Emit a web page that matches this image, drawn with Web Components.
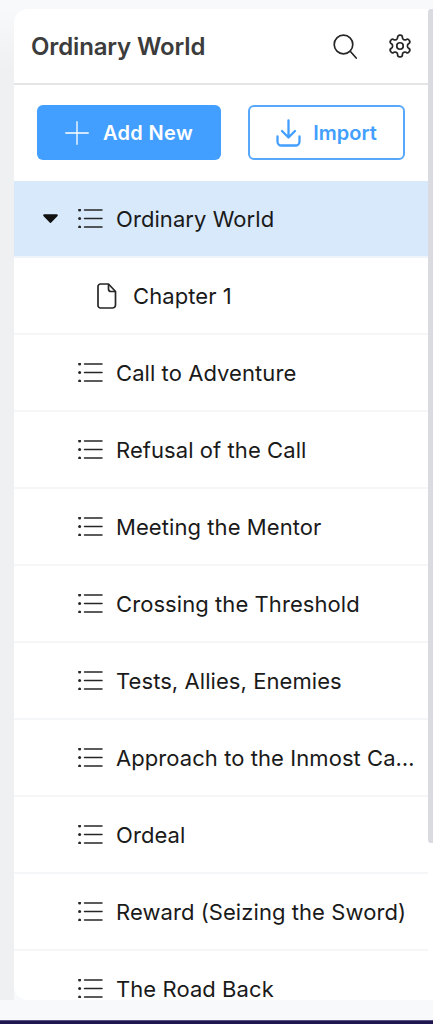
<!DOCTYPE html>
<html>
<head>
<meta charset="utf-8">
<style>
  html, body { margin: 0; height: 1024px; overflow: hidden; background: #f8f9fb; font-family: Inter, "Liberation Sans", sans-serif; }
</style>
</head>
<body>
<story-outline></story-outline>
<script>
const ICONS = {
  search: `<svg width="24" height="25" viewBox="0 0 24 25" fill="none" stroke="#262626" stroke-width="1.7" stroke-linecap="round"><circle cx="10.500" cy="10.500" r="9.300"/><path d="M17.200 17.300l6 6.700"/></svg>`,
  gear: `<svg width="26" height="26" viewBox="0 0 24 24" fill="none" stroke="#262626" stroke-width="1.6" stroke-linecap="round" stroke-linejoin="round"><path d="M12.220 2h-.44a2 2 0 0 0-2 2v.18a2 2 0 0 1-1 1.730l-.43.25a2 2 0 0 1-2 0l-.15-.08a2 2 0 0 0-2.730.73l-.22.38a2 2 0 0 0 .73 2.730l.15.1a2 2 0 0 1 1 1.720v.51a2 2 0 0 1-1 1.740l-.15.09a2 2 0 0 0-.73 2.730l.22.38a2 2 0 0 0 2.730.73l.15-.08a2 2 0 0 1 2 0l.43.25a2 2 0 0 1 1 1.730V20a2 2 0 0 0 2 2h.44a2 2 0 0 0 2-2v-.18a2 2 0 0 1 1-1.730l.43-.25a2 2 0 0 1 2 0l.15.08a2 2 0 0 0 2.730-.73l.22-.39a2 2 0 0 0-.73-2.730l-.15-.08a2 2 0 0 1-1-1.740v-.5a2 2 0 0 1 1-1.740l.15-.09a2 2 0 0 0 .73-2.730l-.22-.38a2 2 0 0 0-2.730-.73l-.15.08a2 2 0 0 1-2 0l-.43-.25a2 2 0 0 1-1-1.730V4a2 2 0 0 0-2-2z"/><circle cx="12" cy="12" r="3"/></svg>`,
  plus: `<svg width="24" height="24" viewBox="0 0 24 24" fill="none" stroke="currentColor" stroke-width="1.3" stroke-linecap="round"><path d="M12 .7v22.600M.7 12h22.600"/></svg>`,
  download: `<svg width="25" height="28" viewBox="0 0 25 28" fill="none" stroke="currentColor" stroke-width="2.300" stroke-linecap="round" stroke-linejoin="round"><path d="M12.500 1.500v17M6 12l6.500 6.500L19 12"/><path d="M1.500 17.500v5a4 4 0 0 0 4 4h14a4 4 0 0 0 4-4v-5"/></svg>`,
  list: `<svg width="25" height="19" viewBox="0 0 25 19" fill="none" stroke="#262626" stroke-width="1.500" stroke-linecap="round"><path d="M6.500 1h17.500M6.500 9.500h17.500M6.500 18h17.500"/><g fill="#262626" stroke="none"><circle cx="1.600" cy="1" r="1.500"/><circle cx="1.600" cy="9.500" r="1.500"/><circle cx="1.600" cy="18" r="1.500"/></g></svg>`,
  file: `<svg width="20" height="26" viewBox="0 0 20 26" fill="none" stroke="#262626" stroke-width="1.700" stroke-linejoin="round"><path d="M3.500 1h8l7 7.500v13.500a3 3 0 0 1-3 3H3.500a2.500 2.500 0 0 1-2.500-2.500V3.500A2.500 2.500 0 0 1 3.500 1z"/><path d="M11.500 1v5a2.500 2.500 0 0 0 2.500 2.500h4.500"/></svg>`,
  caret: `<svg width="15" height="9" viewBox="0 0 15 9"><path d="M1.200.3h12.600a1 1 0 0 1 .8 1.600L8.300 8.500a1 1 0 0 1-1.600 0L.4 1.900A1 1 0 0 1 1.200.3z" fill="#111"/></svg>`
}

class ActionButton extends HTMLElement {
  constructor(){
    super()
    this.attachShadow({ mode: "open" })
    const filled = this.hasAttribute("filled")
    this.shadowRoot.innerHTML = `
      <style>
        :host { display: block; box-sizing: border-box; height: 55px; border-radius: 6px; }
        div {
          box-sizing: border-box; height: 100%; display: flex; align-items: center; justify-content: center;
          gap: ${filled ? 14 : 12}px; border-radius: 6px; font-size: 20px; font-weight: 600;
          letter-spacing: ${filled ? .35 : 0}px;
          background: ${filled ? "#429eff" : "#fff"}; color: ${filled ? "#fff" : "#429eff"};
          border: ${filled ? "none" : "2px solid #57a8fb"};
        }
        svg { display: block; }
      </style>
      <div>${ICONS[this.getAttribute("icon")]}<slot></slot></div>`
  }
}

class OutlineRow extends HTMLElement {
  constructor(){
    super()
    this.attachShadow({ mode: "open" })
    const kind = this.getAttribute("kind") || "list"
    const open = this.hasAttribute("open")
    this.shadowRoot.innerHTML = `
      <style>
        :host { display: block; flex: none; height: 77px; box-sizing: border-box; border-bottom: 2px solid #f5f6f7; }
        :host([open]) { background: #d7e9fb; border-bottom-color: #eef4fa; }
        .row { height: 100%; display: flex; align-items: center; padding-left: ${kind === "file" ? 83 : 64}px; font-size: 22px; letter-spacing: .07px; color: #1a1a1a; white-space: nowrap; }
        .caret { position: absolute; margin-left: -35px; line-height: 0; }
        .icon { width: ${kind === "file" ? 20 : 25}px; display: flex; margin-right: ${kind === "file" ? 16 : 13}px; }
        svg { display: block; }
        .label { width: 300px; overflow: hidden; text-overflow: ellipsis; }
      </style>
      <div class="row">
        ${open ? `<span class="caret">${ICONS.caret}</span>` : ""}
        <span class="icon">${ICONS[kind]}</span>
        <span class="label"><slot></slot></span>
      </div>`
  }
}

class StoryOutline extends HTMLElement {
  constructor(){
    super()
    this.attachShadow({ mode: "open" })
    this.shadowRoot.innerHTML = `
      <style>
        :host {
          display: block; position: relative; height: 1024px; padding: 9px 0 0 14px; box-sizing: border-box; overflow: hidden;
          background: linear-gradient(180deg, #f8f9fb 0, #f8f9fb 10px, #eff0f2 70px) no-repeat 0 0 / 14px 1000px, #f8f9fb;
        }
        .panel { height: 991px; padding-right: 5px; box-sizing: border-box; background: #fff; border-radius: 14px 0 0 14px; overflow: hidden; display: flex; flex-direction: column; }
        header { flex: none; height: 74px; display: flex; align-items: center; padding: 0 15px 0 17px; border-bottom: 2px solid #e4e5e7; }
        h1 { margin: 0; flex: 1; font-size: 24px; font-weight: 600; letter-spacing: -.14px; color: #3c3c3c; }
        header .tools { display: flex; align-items: center; gap: 30px; }
        header svg { display: block; }
        .actions { flex: none; height: 96px; box-sizing: border-box; padding-top: 20px; display: flex; padding-left: 23px; gap: 27px; }
        .actions action-button:first-child { width: 184px; }
        .actions action-button:last-child { width: 157px; }
        .scrollbar { position: absolute; right: 0; top: 9px; width: 5px; height: 834px; background: #d9dbe0; border-radius: 3px 0 0 3px; }
        .footer { position: absolute; left: 0; right: 0; bottom: 0; height: 4px; box-sizing: border-box; border-top: 1px solid #5a5280; background: #1f1550; }
      </style>
      <div class="panel">
        <header>
          <h1>Ordinary World</h1>
          <div class="tools">${ICONS.search}${ICONS.gear}</div>
        </header>
        <div class="actions">
          <action-button filled icon="plus">Add New</action-button>
          <action-button icon="download">Import</action-button>
        </div>
        <outline-row open>Ordinary World</outline-row>
        <outline-row kind="file">Chapter 1</outline-row>
        <outline-row>Call to Adventure</outline-row>
        <outline-row>Refusal of the Call</outline-row>
        <outline-row>Meeting the Mentor</outline-row>
        <outline-row>Crossing the Threshold</outline-row>
        <outline-row>Tests, Allies, Enemies</outline-row>
        <outline-row>Approach to the Inmost Cave</outline-row>
        <outline-row>Ordeal</outline-row>
        <outline-row>Reward (Seizing the Sword)</outline-row>
        <outline-row>The Road Back</outline-row>
      </div>
      <div class="scrollbar"></div>
      <div class="footer"></div>`
  }
}

customElements.define("action-button", ActionButton)
customElements.define("outline-row", OutlineRow)
customElements.define("story-outline", StoryOutline)
</script>
</body>
</html>
